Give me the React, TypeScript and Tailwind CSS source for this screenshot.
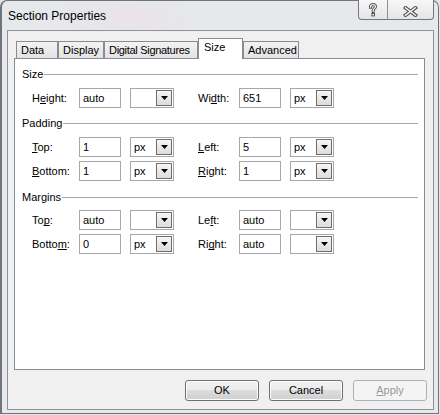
import React from "react";

function U({ children }: { children: React.ReactNode }) {
  return (
    <span className="underline underline-offset-[1px] decoration-[1px] [text-decoration-skip-ink:none]">{children}</span>
  );
}

function TextBox({ value }: { value: string }) {
  return (
    <div className="w-[42px] h-[20px] border border-[#a7a7a7] bg-white pl-[3px] flex items-center">
      {value}
    </div>
  );
}

function Combo({ value }: { value?: string }) {
  return (
    <div className="w-[44px] h-[20px] border border-[#a7a7a7] bg-white flex items-center pl-[3px] pr-px">
      <span className="flex-1">{value}</span>
      <div className="w-[16px] h-[16px] border border-[#6d6d6d] bg-[linear-gradient(180deg,#f6f6f6,#dcdcdc)] flex items-center justify-center">
        <svg width="7" height="4" viewBox="0 0 7 4">
          <path d="M0 0H7L3.5 4Z" fill="#000" />
        </svg>
      </div>
    </div>
  );
}

function Row({
  l1,
  v1,
  u1,
  l2,
  v2,
  u2,
}: {
  l1: React.ReactNode;
  v1: string;
  u1?: string;
  l2: React.ReactNode;
  v2: string;
  u2?: string;
}) {
  return (
    <div className="flex items-center h-[20px] pl-[17px]">
      <div className="w-[47px]">{l1}</div>
      <TextBox value={v1} />
      <div className="ml-[9px]">
        <Combo value={u1} />
      </div>
      <div className="w-[41px] ml-[24px]">{l2}</div>
      <TextBox value={v2} />
      <div className="ml-[9px]">
        <Combo value={u2} />
      </div>
    </div>
  );
}

function Header({ title }: { title: string }) {
  return (
    <div className="flex items-center h-[13px] pl-[7px] pr-[6px]">
      <span className="pr-[1px]">{title}</span>
      <div className="flex-1 h-px bg-[#a9a9a9]" />
    </div>
  );
}

function Tab({ label, cls, selected }: { label: string; cls: string; selected?: boolean }) {
  if (selected) {
    return (
      <div className={`relative z-10 -mb-px h-[21px] bg-white border border-b-0 border-[#898c95] pl-[5px] pt-[2px] whitespace-nowrap ${cls}`}>
        {label}
      </div>
    );
  }
  return (
    <div className={`h-[17px] bg-[linear-gradient(180deg,#f3f3f3,#e3e3e3)] border border-b-0 border-[#898c95] pl-[4px] pt-[2px] whitespace-nowrap overflow-hidden ${cls}`}>
      {label}
    </div>
  );
}

function Btn({ children, disabled }: { children: React.ReactNode; disabled?: boolean }) {
  if (disabled) {
    return (
      <div className="w-[74px] h-[21px] border border-[#adb2b5] rounded-[3px] bg-[#f4f4f4] text-[#9a9a9a] flex items-center justify-center">
        {children}
      </div>
    );
  }
  return (
    <div className="w-[74px] h-[21px] border border-[#707070] rounded-[3px] bg-[linear-gradient(180deg,#f2f2f2_0%,#ebebeb_50%,#dddddd_50%,#cfcfcf_100%)] shadow-[inset_0_0_0_1px_#fcfcfc] flex items-center justify-center">
      {children}
    </div>
  );
}

export default function App() {
  return (
    <div className="w-[440px] h-[415px] bg-[#e3e5e8] font-['Liberation_Sans',Arial,sans-serif] text-[11px] leading-[13px] text-black overflow-hidden">
      <div className="w-[439px] h-[414px] border border-l-2 border-[#6f737a] rounded-t-[7px] bg-[#e6e8eb] bg-[radial-gradient(ellipse_70px_22px_at_125px_16px,#e9e2e9,#e6e8eb)] flex flex-col">
        <div className="h-[29px] flex items-start shrink-0">
          <div className="pl-[6px] mt-[8px] text-[12px] leading-[14px]">Section Properties</div>
          <div className="ml-auto mr-[4px] -mt-px flex h-[20px] border border-t-0 border-[#74777d] rounded-b-[4px] overflow-hidden bg-[linear-gradient(180deg,#f7f7f7,#e4e5e8)]">
            <div className="w-[29px] border-r border-[#8d9096] flex items-center justify-center">
              <svg width="10" height="14" viewBox="0 0 10 14">
                <path
                  d="M2.5 4.2C2.5 2.2 3.6 1.5 5 1.5C6.5 1.5 7.5 2.3 7.5 3.7C7.5 5.2 5.2 5.6 5.2 7.6V8.4"
                  fill="none"
                  stroke="#555"
                  strokeWidth="3"
                  strokeLinecap="square"
                />
                <rect x="3.4" y="10" width="3.6" height="3.4" fill="#555" />
                <path
                  d="M2.5 4.2C2.5 2.2 3.6 1.5 5 1.5C6.5 1.5 7.5 2.3 7.5 3.7C7.5 5.2 5.2 5.6 5.2 7.6V8.4"
                  fill="none"
                  stroke="#f6f6f6"
                  strokeWidth="1.1"
                  strokeLinecap="square"
                />
                <rect x="4.4" y="11" width="1.6" height="1.4" fill="#f6f6f6" />
              </svg>
            </div>
            <div className="w-[45px] flex items-center justify-center pt-[3px]">
              <svg width="15" height="11" viewBox="0 0 15 11">
                <path d="M2.5 1.8L12.5 9.2M12.5 1.8L2.5 9.2" stroke="#555" strokeWidth="3.6" strokeLinecap="square" />
                <path d="M2.5 1.8L12.5 9.2M12.5 1.8L2.5 9.2" stroke="#f6f6f6" strokeWidth="1.4" strokeLinecap="square" />
              </svg>
            </div>
          </div>
        </div>
        <div className="ml-[5px] w-[427px] h-[380px] border border-[#8e9197] bg-[#f0f0f0] flex flex-col shrink-0">
          <div className="pl-[6px] pt-[7px]">
            <div className="flex items-end h-[20px] pl-[2px]">
              <Tab label="Data" cls="w-[42px]" />
              <Tab label="Display" cls="w-[46px]" />
              <Tab label="Digital Signatures" cls="w-[94px] tracking-[-0.3px]" />
              <Tab label="Size" cls="w-[45px]" selected />
              <Tab label="Advanced" cls="w-[56px]" />
            </div>
            <div className="relative w-[411px] h-[312px] border border-[#898c95] bg-white pt-[9px] flex flex-col">
              <Header title="Size" />
              <div className="mt-[7px]">
                <Row
                  l1={<span>H<U>e</U>ight:</span>}
                  v1="auto"
                  l2={<span>Wi<U>d</U>th:</span>}
                  v2="651"
                  u2="px"
                />
              </div>
              <div className="mt-[9px]">
                <Header title="Padding" />
              </div>
              <div className="mt-[7px]">
                <Row
                  l1={<span><U>T</U>op:</span>}
                  v1="1"
                  u1="px"
                  l2={<span><U>L</U>eft:</span>}
                  v2="5"
                  u2="px"
                />
              </div>
              <div className="mt-[4px]">
                <Row
                  l1={<span><U>B</U>ottom:</span>}
                  v1="1"
                  u1="px"
                  l2={<span><U>R</U>ight:</span>}
                  v2="1"
                  u2="px"
                />
              </div>
              <div className="mt-[10px]">
                <Header title="Margins" />
              </div>
              <div className="mt-[6px]">
                <Row
                  l1={<span>To<U>p</U>:</span>}
                  v1="auto"
                  l2={<span>Le<U>f</U>t:</span>}
                  v2="auto"
                />
              </div>
              <div className="mt-[4px]">
                <Row
                  l1={<span>Botto<U>m</U>:</span>}
                  v1="0"
                  u1="px"
                  l2={<span>Ri<U>g</U>ht:</span>}
                  v2="auto"
                />
              </div>
            </div>
          </div>
          <div className="mt-[10px] flex justify-end gap-[10px] pr-[6px]">
            <Btn>OK</Btn>
            <Btn>Cancel</Btn>
            <Btn disabled>
              <span>
                <U>A</U>pply
              </span>
            </Btn>
          </div>
        </div>
      </div>
    </div>
  );
}
